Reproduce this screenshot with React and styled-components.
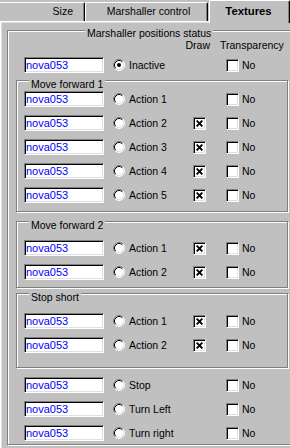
import React from "react";
import styled, { createGlobalStyle } from "styled-components";

const GlobalStyle = createGlobalStyle`
  html, body {
    margin: 0;
    padding: 0;
    background: #c0c0c0;
  }
  body {
    font-family: "Liberation Sans", Arial, sans-serif;
  }
`;

const Window = styled.div`
  width: 290px;
  height: 448px;
  overflow: hidden;
  background: #c0c0c0;
  color: #000;
  font-size: 10.5px;
`;

const TabStrip = styled.div`
  display: flex;
  align-items: flex-end;
  height: 21px;
  position: relative;
  z-index: 1;
`;

const Tab = styled.div`
  box-sizing: border-box;
  display: flex;
  justify-content: ${(p) => p.$justify || "center"};
  width: ${(p) => p.$w}px;
  height: ${(p) => (p.$active ? 23 : 19)}px;
  margin-left: ${(p) => p.$ml || 0}px;
  margin-bottom: ${(p) => (p.$active ? -2 : 0)}px;
  padding: ${(p) => (p.$active ? 4 : 2)}px ${(p) => p.$pr || 0}px 0 ${(p) => p.$pl || 0}px;
  background: #c0c0c0;
  border-top: 1px solid #fff;
  border-left: ${(p) => (p.$noLeft ? "none" : "1px solid #fff")};
  border-right: 1px solid #000;
  border-radius: ${(p) => (p.$noLeft ? "0 2px 0 0" : "2px 2px 0 0")};
  box-shadow: inset -1px 0 #808080;
  font-size: ${(p) => (p.$active ? "11.3px" : "10.5px")};
  font-weight: ${(p) => (p.$active ? 700 : 400)};
  line-height: 13px;
  white-space: nowrap;
`;

const Panel = styled.div`
  height: 427px;
  box-sizing: border-box;
  border-top: 1px solid #fff;
  border-left: 1px solid #fff;
  box-shadow: inset 1px 1px #dfdfdf;
  padding: 8px 0 0 6px;
`;

const Group = styled.div`
  box-sizing: border-box;
  width: ${(p) => p.$w}px;
  margin-top: ${(p) => p.$mt || 0}px;
  padding: 0 0 ${(p) => p.$pb}px ${(p) => p.$pl}px;
  border: 1px solid #808080;
  box-shadow: inset 1px 1px #fff, 1px 1px #fff;
`;

const Legend = styled.div`
  width: fit-content;
  height: 12px;
  line-height: 12px;
  margin-top: ${(p) => p.$mt}px;
  margin-left: ${(p) => p.$ml}px;
  padding: 0 2px;
  background: #c0c0c0;
  white-space: nowrap;
`;

const HeaderRow = styled.div`
  display: flex;
  height: 12px;
  line-height: 12px;
`;

const HeadCell = styled.div`
  width: ${(p) => p.$w}px;
  margin-left: ${(p) => p.$ml}px;
  text-align: ${(p) => p.$align || "left"};
  white-space: nowrap;
`;

const Row = styled.div`
  display: flex;
  align-items: center;
  height: 16px;
  line-height: 16px;
  margin-top: ${(p) => p.$mt || 0}px;
  margin-left: ${(p) => p.$ml || 0}px;
`;

const Field = styled.div`
  box-sizing: border-box;
  flex: none;
  width: 80px;
  height: 16px;
  margin-right: 9px;
  padding-left: 1px;
  border: 1px solid;
  border-color: #808080 #fff #fff #808080;
  box-shadow: inset 1px 1px #000, inset -1px -1px #dfdfdf;
  background: #fff;
  color: #0000ff;
  font-size: 11px;
  line-height: 14px;
`;

const RadioBox = styled.svg`
  flex: none;
  display: block;
  margin-right: 4px;
`;

const Radio = ({ on }) => (
  <RadioBox width="12" height="12" viewBox="0 0 12 12">
    <circle cx="6" cy="6" r="5" fill="#fff" />
    <path d="M2.11 9.89 A5.5 5.5 0 0 1 9.89 2.11" fill="none" stroke="#808080" />
    <path d="M9.89 2.11 A5.5 5.5 0 0 1 2.11 9.89" fill="none" stroke="#fff" />
    <path d="M2.82 9.18 A4.5 4.5 0 0 1 9.18 2.82" fill="none" stroke="#000" />
    <path d="M9.18 2.82 A4.5 4.5 0 0 1 2.82 9.18" fill="none" stroke="#dfdfdf" />
    {on && <circle cx="6" cy="6" r="2" fill="#000" />}
  </RadioBox>
);

const Label = styled.span`
  flex: none;
  width: 64px;
  white-space: nowrap;
`;

const DrawCell = styled.span`
  flex: none;
  width: 33px;
  display: flex;
  align-items: center;
`;

const Check = styled.span`
  box-sizing: border-box;
  flex: none;
  display: flex;
  align-items: center;
  justify-content: center;
  width: 13px;
  height: 13px;
  margin-right: 3px;
  border: 1px solid;
  border-color: #808080 #fff #fff #808080;
  box-shadow: inset 1px 1px #000, inset -1px -1px #dfdfdf;
  background: #fff;
`;

const Cross = () => (
  <svg width="7" height="7" viewBox="0 0 7 7">
    <path d="M0.6 0.6 L6.4 6.4 M6.4 0.6 L0.6 6.4" stroke="#000" strokeWidth="1.9" />
  </svg>
);

const Entry = ({ label, active, draw, mt, ml }) => (
  <Row $mt={mt} $ml={ml}>
    <Field>nova053</Field>
    <Radio on={active} />
    <Label>{label}</Label>
    <DrawCell>{draw && <Check><Cross /></Check>}</DrawCell>
    <Check />
    <span>No</span>
  </Row>
);

const groups = [
  {
    title: "Move forward 1",
    mt: 7,
    firstGap: 1,
    pb: 8,
    rows: [
      { label: "Action 1", draw: false },
      { label: "Action 2", draw: true },
      { label: "Action 3", draw: true },
      { label: "Action 4", draw: true },
      { label: "Action 5", draw: true },
    ],
  },
  {
    title: "Move forward 2",
    mt: 9,
    firstGap: 9,
    pb: 7,
    rows: [
      { label: "Action 1", draw: true },
      { label: "Action 2", draw: true },
    ],
  },
  {
    title: "Stop short",
    mt: 5,
    firstGap: 10,
    pb: 14,
    rows: [
      { label: "Action 1", draw: true },
      { label: "Action 2", draw: true },
    ],
  },
];

const bottomRows = ["Stop", "Turn Left", "Turn right"];

export default function App() {
  return (
    <Window>
      <GlobalStyle />
      <TabStrip>
        <Tab $w={85} $noLeft $justify="flex-end" $pr={11}>Size</Tab>
        <Tab $w={123} $pl={4}>Marshaller control</Tab>
        <Tab $w={81} $ml={1} $active $pr={2}>Textures</Tab>
      </TabStrip>
      <Panel>
        <Group $w={300} $pl={8} $pb={3}>
          <Legend $mt={-4} $ml={69}>Marshaller positions status</Legend>
          <HeaderRow>
            <HeadCell $w={30} $ml={164} $align="right">Draw</HeadCell>
            <HeadCell $w={70} $ml={10}>Transparency</HeadCell>
          </HeaderRow>
          <Entry label="Inactive" active mt={6} ml={8} />
          {groups.map((g) => (
            <Group key={g.title} $w={272} $mt={g.mt} $pl={7} $pb={g.pb}>
              <Legend $mt={-3} $ml={5}>{g.title}</Legend>
              {g.rows.map((r, i) => (
                <Entry
                  key={r.label}
                  label={r.label}
                  draw={r.draw}
                  mt={i === 0 ? g.firstGap : 8}
                />
              ))}
            </Group>
          ))}
          {bottomRows.map((label, i) => (
            <Entry key={label} label={label} mt={i === 0 ? 9 : 8} ml={8} />
          ))}
        </Group>
      </Panel>
    </Window>
  );
}
